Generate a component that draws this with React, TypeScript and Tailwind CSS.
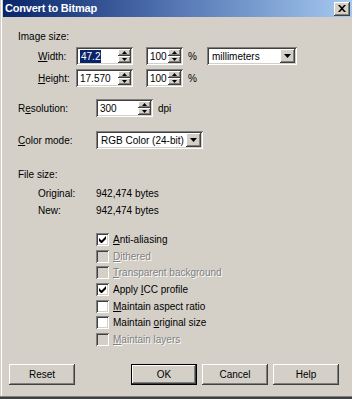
import type { ReactNode } from "react";

const sunken =
  "shadow-[inset_1px_1px_0_#808080,inset_-1px_-1px_0_#ffffff,inset_2px_2px_0_#404040,inset_-2px_-2px_0_#d4d0c8]";
const raised =
  "bg-[#d4d0c8] shadow-[inset_-1px_-1px_0_#404040,inset_1px_1px_0_#ffffff,inset_-2px_-2px_0_#808080,inset_2px_2px_0_#d4d0c8]";
const disabledText = "text-[#808080] [text-shadow:1px_1px_0_#ffffff]";

function Arrow({ up, small }: { up?: boolean; small?: boolean }) {
  const w = small ? 5 : 7;
  const h = small ? 3 : 4;
  return (
    <svg width={w} height={h} viewBox={`0 0 ${w} ${h}`} aria-hidden="true">
      <polygon
        points={up ? `0,${h} ${w},${h} ${w / 2},0` : `0,0 ${w},0 ${w / 2},${h}`}
        fill="#000000"
      />
    </svg>
  );
}

function Spin() {
  return (
    <div className="flex h-full w-[13px] flex-col">
      <div className={`${raised} flex flex-1 items-center justify-center`}>
        <Arrow up small />
      </div>
      <div className={`${raised} flex flex-1 items-center justify-center`}>
        <Arrow small />
      </div>
    </div>
  );
}

function SpinField({ value, width, selected }: { value: string; width: string; selected?: boolean }) {
  return (
    <div className={`${sunken} ${width} flex h-[18px] items-stretch bg-white p-[2px]`}>
      <div className="flex flex-1 items-center pl-[2px]">
        {selected ? <span className="bg-[#0a246a] px-[1px] text-white">{value}</span> : value}
      </div>
      <Spin />
    </div>
  );
}

function Combo({ value, width }: { value: string; width: string }) {
  return (
    <div className={`${sunken} ${width} flex h-[18px] items-stretch bg-white p-[2px]`}>
      <div className="flex flex-1 items-center overflow-hidden whitespace-nowrap pl-[3px]">{value}</div>
      <div className={`${raised} flex w-[15px] items-center justify-center`}>
        <Arrow />
      </div>
    </div>
  );
}

function Check({ label, checked, disabled }: { label: ReactNode; checked?: boolean; disabled?: boolean }) {
  return (
    <div className="flex h-[16.7px] items-center">
      <div
        className={`${sunken} flex h-[13px] w-[13px] items-center justify-center ${
          disabled ? "bg-[#d4d0c8]" : "bg-white"
        }`}
      >
        {checked ? (
          <svg width="7" height="7" viewBox="0 0 7 7" aria-hidden="true">
            <path d="M0 2v3l2 2h1l4-4V0L2.5 4.5z" fill="#000000" />
          </svg>
        ) : null}
      </div>
      <span className={`ml-[4px] whitespace-nowrap ${disabled ? disabledText : ""}`}>{label}</span>
    </div>
  );
}

function Button({ label, primary }: { label: ReactNode; primary?: boolean }) {
  return (
    <div className={`${primary ? "border border-black" : ""} h-[21px] w-[66px]`}>
      <div className={`${raised} flex h-full items-center justify-center`}>{label}</div>
    </div>
  );
}

export default function App() {
  return (
    <div className="h-[399px] w-[352px] overflow-hidden bg-[#d4d0c8] font-['Liberation_Sans',Arial,sans-serif] text-[10px] leading-[13px] text-black">
      <div className="flex h-[396px] flex-col pl-[3px] shadow-[inset_1px_0_0_#d4d0c8,inset_2px_0_0_#ffffff]">
        <div className="flex h-[17px] items-center justify-between bg-gradient-to-r from-[#0a246a] via-[#5677b4] to-[#a6caf0] pr-[2px] pl-[2px]">
          <span className="text-[11px] font-bold tracking-[-0.2px] text-white">Convert to Bitmap</span>
          <div className={`${raised} flex h-[14px] w-[16px] items-center justify-center`}>
            <svg width="8" height="7" viewBox="0 0 8 7" aria-hidden="true">
              <path d="M0 0h2l2 2.2L6 0h2L5 3.5 8 7H6L4 4.8 2 7H0l3-3.5z" fill="#000000" />
            </svg>
          </div>
        </div>

        <div className="flex flex-1 flex-col pl-[15px]">
          <div className="mt-[13px]">Image size:</div>

          <div className="mt-[4px] flex h-[18px] items-center">
            <span className="w-[58px] pl-[20px]">
              <u>W</u>idth:
            </span>
            <SpinField value="47.2" width="w-[57px]" selected />
            <div className="ml-[13px]">
              <SpinField value="100" width="w-[37px]" />
            </div>
            <span className="ml-[5px]">%</span>
            <div className="ml-[10px]">
              <Combo value="millimeters" width="w-[90px]" />
            </div>
          </div>

          <div className="mt-[4px] flex h-[18px] items-center">
            <span className="w-[58px] pl-[20px]">
              <u>H</u>eight:
            </span>
            <SpinField value="17.570" width="w-[57px]" />
            <div className="ml-[13px]">
              <SpinField value="100" width="w-[37px]" />
            </div>
            <span className="ml-[5px]">%</span>
          </div>

          <div className="mt-[12px] flex h-[18px] items-center">
            <span className="w-[78px]">
              R<u>e</u>solution:
            </span>
            <SpinField value="300" width="w-[57px]" />
            <span className="ml-[5px]">dpi</span>
          </div>

          <div className="mt-[14px] flex h-[18px] items-center">
            <span className="w-[78px]">
              <u>C</u>olor mode:
            </span>
            <Combo value="RGB Color (24-bit)" width="w-[107px]" />
          </div>

          <div className="mt-[19px]">File size:</div>

          <div className="mt-[6px] flex pl-[20px]">
            <span className="w-[58px]">Original:</span>
            <span>942,474 bytes</span>
          </div>
          <div className="mt-[4px] flex pl-[20px]">
            <span className="w-[58px]">New:</span>
            <span>942,474 bytes</span>
          </div>

          <div className="mt-[14px] flex flex-col pl-[78px]">
            <Check
              checked
              label={
                <>
                  <u>A</u>nti-aliasing
                </>
              }
            />
            <Check
              disabled
              label={
                <>
                  <u>D</u>ithered
                </>
              }
            />
            <Check
              disabled
              label={
                <>
                  <u>T</u>ransparent background
                </>
              }
            />
            <Check
              checked
              label={
                <>
                  Apply <u>I</u>CC profile
                </>
              }
            />
            <Check
              label={
                <>
                  <u>M</u>aintain aspect ratio
                </>
              }
            />
            <Check
              label={
                <>
                  Maintain <u>o</u>riginal size
                </>
              }
            />
            <Check
              disabled
              label={
                <>
                  <u>M</u>aintain layers
                </>
              }
            />
          </div>

          <div className="mt-auto mb-[11px] flex items-center">
            <div className="-ml-[9px]">
              <Button label="Reset" />
            </div>
            <div className="ml-[56px]">
              <Button label="OK" primary />
            </div>
            <div className="ml-[5px]">
              <Button label="Cancel" />
            </div>
            <div className="ml-[5px]">
              <Button label="Help" />
            </div>
          </div>
        </div>
      </div>
      <div className="h-[3px] border-t border-[#808080] bg-[#404040]" />
    </div>
  );
}
